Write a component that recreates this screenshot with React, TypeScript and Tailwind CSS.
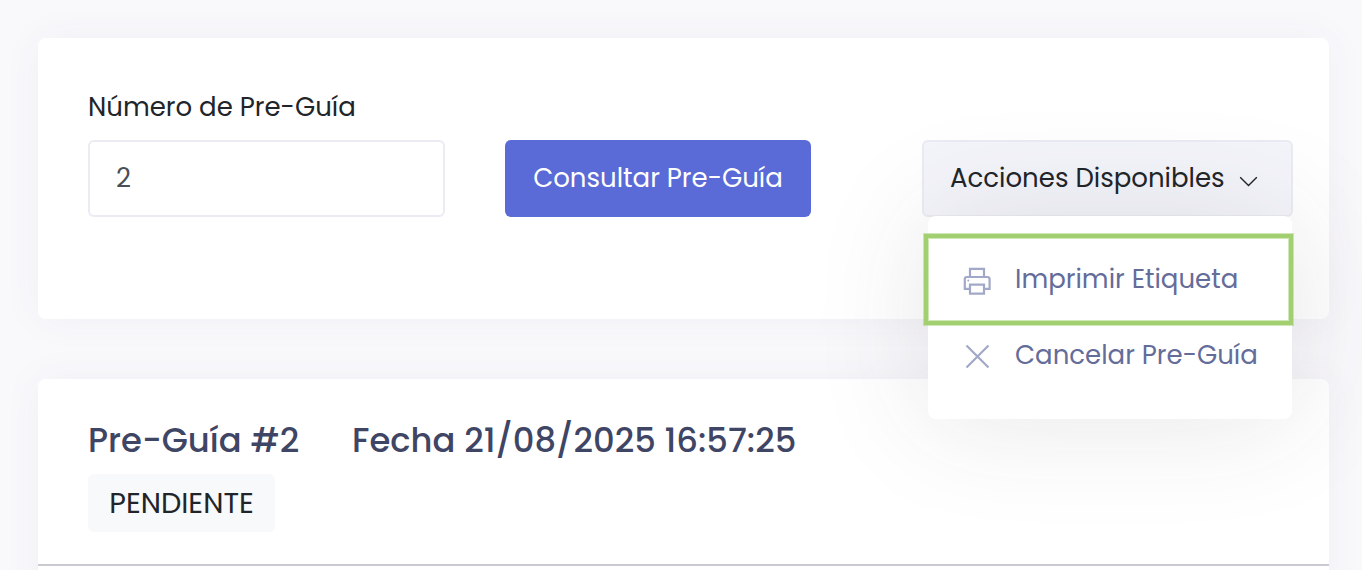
import React, { useState } from "react";

const PrinterIcon = () => (
  <svg
    className="h-7 w-7 shrink-0"
    viewBox="0 0 28 28"
    fill="none"
    stroke="currentColor"
    strokeWidth="2.2"
  >
    <path d="M7 9V1.8H21V9" />
    <path d="M6.8 21.8H1.8V12.2Q1.8 10 4 10H24.4Q26.6 10 26.6 12.2V21.8H21.4" />
    <path d="M7 17.6H21V26.6H7Z" />
    <circle cx="5.3" cy="13.4" r="1" fill="currentColor" stroke="none" />
  </svg>
);

const CloseIcon = () => (
  <svg
    className="h-7 w-7 shrink-0"
    viewBox="0 0 28 28"
    fill="none"
    stroke="currentColor"
    strokeWidth="2.2"
  >
    <path d="M3.5 2.5L25.5 24.5M25.5 2.5L3.5 24.5" />
  </svg>
);

const ChevronIcon = () => (
  <svg
    className="h-5 w-5 shrink-0"
    viewBox="0 0 20 20"
    fill="none"
    stroke="currentColor"
    strokeWidth="1.4"
  >
    <path d="M2.2 5.2L10.5 13.5L18.8 5.2" />
  </svg>
);

const actions = [
  { label: "Imprimir Etiqueta", icon: PrinterIcon },
  { label: "Cancelar Pre-Guía", icon: CloseIcon },
];

const App = () => {
  const [numero, setNumero] = useState("2");
  const [open, setOpen] = useState(true);

  return (
    <div className="h-[570px] w-[1362px] overflow-hidden bg-[#f9f9fc] pl-[38px] pr-[33px] pt-[38px] text-[26px] leading-[39px] text-[#212529] font-[Poppins,sans-serif]">
      {/* Search card */}
      <div className="h-[281px] rounded-lg bg-white pl-[50px] pr-9 pt-[50px] shadow-[0_0_40px_rgba(82,63,105,0.05)]">
        <label htmlFor="numero" className="block h-[52px] whitespace-nowrap">
          Número de Pre-Guía
        </label>
        <div className="flex items-start">
          <input
            id="numero"
            value={numero}
            onChange={(e) => setNumero(e.target.value)}
            className="h-[77px] w-[357px] rounded-md border-2 border-[#ebebf3] px-[26px] text-[#495057] outline-none"
          />
          <button className="ml-[60px] h-[77px] w-[306px] whitespace-nowrap rounded-md bg-[#5a6ad6] text-white">
            Consultar Pre-Guía
          </button>

          {/* Actions dropdown */}
          <div className="relative ml-auto">
            <button
              onClick={() => setOpen(!open)}
              className="flex h-[77px] w-[371px] items-center whitespace-nowrap rounded-md border-2 border-[#ebebf3] bg-[#f4f5fa] pl-[26px]"
            >
              <span className="w-[274px] text-left">Acciones Disponibles</span>
              <span className="ml-3.5 mt-1.5">
                <ChevronIcon />
              </span>
            </button>
            {open && (
              <div className="absolute left-1.5 top-[76px] z-10 h-[203px] w-[364px] rounded-lg bg-white pt-[25px] shadow-[0_0_115px_rgba(60,55,75,0.125)]">
                {actions.map(({ label, icon: Icon }) => (
                  <div
                    key={label}
                    className="flex h-[76px] items-center whitespace-nowrap pl-[35px] text-[#646c9a]"
                  >
                    <span className="mt-1 text-[#a2a9c8]">
                      <Icon />
                    </span>
                    <span className="ml-6 pt-px">{label}</span>
                  </div>
                ))}
                <div className="absolute -left-1 top-[18px] h-[91px] w-[369px] border-4 border-[#a2d070] shadow-[0_0_0_1px_rgba(162,208,112,0.5),inset_0_0_0_1px_rgba(162,208,112,0.5)]" />
              </div>
            )}
          </div>
        </div>
      </div>

      {/* Detail card */}
      <div className="mt-[60px] h-[400px] rounded-lg bg-white shadow-[0_0_40px_rgba(82,63,105,0.05)]">
        <div className="h-[187px] border-b-2 border-[#c9cacf] pl-[50px] pt-10">
          <h3 className="flex h-[55px] whitespace-nowrap text-[33.8px] font-medium leading-[43px] text-[#3f4564]">
            <span className="w-[264px]">Pre-Guía #2</span>
            <span>Fecha 21/08/2025 16:57:25</span>
          </h3>
          <span className="flex h-[58px] w-[187px] items-center justify-center rounded-md bg-[#f8f9fb] text-[28.8px]">
            PENDIENTE
          </span>
        </div>
      </div>
    </div>
  );
};

export default App;
